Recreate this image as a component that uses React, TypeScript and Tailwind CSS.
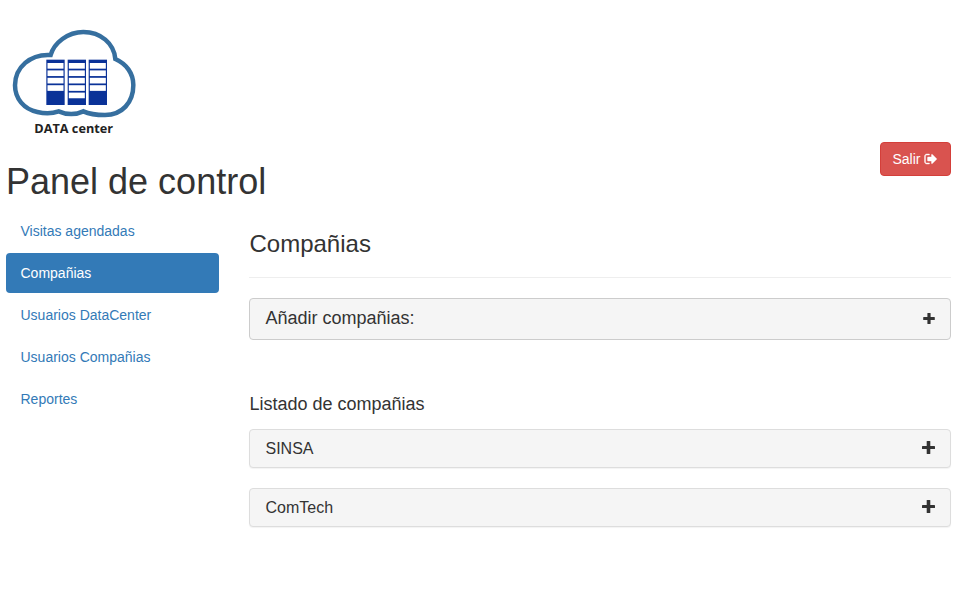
const navItems = ['Visitas agendadas', 'Compañias', 'Usuarios DataCenter', 'Usuarios Compañias', 'Reportes'];
const companies = ['SINSA', 'ComTech'];

function Rack({ x, shelves }: { x: number; shelves: number }) {
  return (
    <g>
      <rect x={x} y={119} width={55} height={136} fill="#0a3298" />
      {Array.from({ length: shelves }, (_, i) => (
        <rect key={i} x={x + 3.5} y={129 + i * 22.2} width={48} height={17} fill="#fff" />
      ))}
    </g>
  );
}

function Logo() {
  return (
    <svg className="h-[120px] w-[150px]" viewBox="0 0 450 360">
      <path
        d="M152 105C162 69 203 36 250 36C302 36 342 70 346 117C380 132 400 161 400 195C400 248 366 285 315 285C290 285 270 283 250 274C226 285 199 284 176 274C157 281 133 281 112 276C72 268 45 236 45 196C45 142 91 101 152 105Z"
        fill="#fff"
        stroke="#366f9f"
        strokeWidth="13.5"
        strokeLinejoin="miter"
      />
      <Rack x={139} shelves={4} />
      <Rack x={203} shelves={5} />
      <Rack x={266} shelves={4} />
      <text x="103" y="339" fontSize="37" fontWeight="700" fill="#222" textLength="236" lengthAdjust="spacingAndGlyphs" className="font-['Open_Sans','Noto_Sans',sans-serif]">
        DATA center
      </text>
    </svg>
  );
}

function SignOutIcon() {
  return (
    <svg className="h-3.5 w-3.5" viewBox="0 0 1792 1792" fill="currentColor" stroke="currentColor" strokeWidth="50">
      <path d="M704 1440q0 4 1 20t.5 26.5-3 23.5-10 19.5-20.5 6.5h-320q-119 0-203.5-84.5t-84.5-203.5v-704q0-119 84.5-203.5t203.5-84.5h320q13 0 22.5 9.5t9.5 22.5q0 4 1 20t.5 26.5-3 23.5-10 19.5-20.5 6.5h-320q-66 0-113 47t-47 113v704q0 66 47 113t113 47h312l11.5 1 11.5 3 8 5.5 7 9 2 13.5zm928-544q0 26-19 45l-544 544q-19 19-45 19t-45-19-19-45v-288h-448q-26 0-45-19t-19-45v-384q0-26 19-45t45-19h448v-288q0-26 19-45t45-19 45 19l544 544q19 19 19 45z" />
    </svg>
  );
}

function PlusIcon({ large = false }: { large?: boolean }) {
  return (
    <svg className={large ? 'mb-0.5 h-[13px] w-[13px]' : 'h-[11px] w-3'} viewBox={large ? '0 0 13 13' : '0 0 12 11'} fill="currentColor">
      {large ? (
        <>
          <rect x="0" y="5" width="13" height="3" rx=".6" />
          <rect x="4.7" y="0" width="3.6" height="13" rx=".6" />
        </>
      ) : (
        <>
          <rect x="0.2" y="4" width="11.6" height="3" rx=".6" />
          <rect x="4.4" y="0" width="3.2" height="11" rx=".6" />
        </>
      )}
    </svg>
  );
}

export default function App() {
  return (
    <div className="min-h-[611px] bg-white pt-5 font-['Liberation_Sans',Arial,sans-serif] text-sm leading-5 text-[#333]">
      <header className="flex h-[191px] justify-between pr-4">
        <div>
          <Logo />
          <h1 className="ml-1.5 mt-[22px] text-4xl leading-[40px]">Panel de control</h1>
        </div>
        <button className="mt-[122px] flex h-[34px] w-[71px] items-center rounded border border-[#d43f3a] bg-[#d9534f] pl-[11.5px] text-white">
          <span className="mr-[3px]">Salir</span>
          <SignOutIcon />
        </button>
      </header>
      <div className="flex gap-[30px] pl-1.5 pr-4">
        <nav className="flex w-[213px] shrink-0 flex-col gap-0.5">
          {navItems.map((item) => (
            <a
              key={item}
              href="#"
              className={
                item === 'Compañias'
                  ? 'rounded bg-[#337ab7] py-2.5 pl-[14.5px] pr-[15px] text-white'
                  : 'rounded py-2.5 pl-[14.5px] pr-[15px] text-[#337ab7]'
              }
            >
              {item}
            </a>
          ))}
        </nav>
        <main className="flex-1 pt-5">
          <h3 className="pl-[0.5px] text-2xl leading-[26px]">Compañias</h3>
          <hr className="mt-5 border-t border-[#eee]" />
          <div className="mt-5 flex h-[42px] items-center justify-between rounded border border-[#ccc] bg-[#f5f5f5] pb-0.5 pl-[15.5px] pr-[15px]">
            <h4 className="text-lg leading-5">Añadir compañias:</h4>
            <PlusIcon />
          </div>
          <h4 className="mb-[15px] mt-[54px] pl-[0.5px] text-lg leading-5">Listado de compañias</h4>
          <div className="flex flex-col gap-5">
            {companies.map((name) => (
              <div
                key={name}
                className="flex h-[39px] items-center justify-between rounded border border-[#ddd] bg-[#f5f5f5] pl-[15.5px] pr-[15px] shadow-[0_1px_1px_rgba(0,0,0,0.05)]"
              >
                <span className="text-base leading-[18px]">{name}</span>
                <PlusIcon large />
              </div>
            ))}
          </div>
        </main>
      </div>
    </div>
  );
}
